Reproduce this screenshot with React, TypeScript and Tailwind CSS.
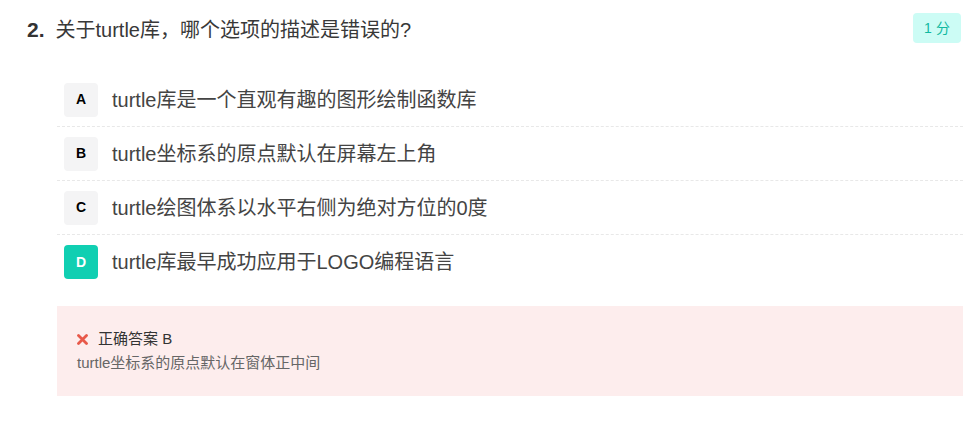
import React from "react";

const options = [
  { key: "A", text: "turtle库是一个直观有趣的图形绘制函数库", selected: false },
  { key: "B", text: "turtle坐标系的原点默认在屏幕左上角", selected: false },
  { key: "C", text: "turtle绘图体系以水平右侧为绝对方位的0度", selected: false },
  { key: "D", text: "turtle库最早成功应用于LOGO编程语言", selected: true },
];

export default function App() {
  return (
    <div
      className="w-[963px] h-[427px] bg-white pl-[27px] pt-[13px] overflow-hidden"
      style={{ fontFamily: '"Liberation Sans", Arial, "Noto Sans CJK SC", sans-serif' }}
    >
      <div className="flex items-start justify-between">
        <div className="flex items-center h-[34px] gap-[11px]">
          <span className="text-[21px] font-bold text-[#333]">2.</span>
          <span className="text-[20px] text-[#383838]">关于turtle库，哪个选项的描述是错误的?</span>
        </div>
        <div className="mr-[2px] h-[30px] w-[48px] rounded-[4px] bg-[#ccfcf5] text-[#10b9a0] text-[14px] flex items-center justify-center gap-[4px]">
          <span>1</span>
          <span>分</span>
        </div>
      </div>

      <div className="ml-[30px] mt-[26px]">
        {options.map((o, i) => (
          <div
            key={o.key}
            className={
              "flex items-center h-[54px] pl-[7px] gap-[14px] " +
              (i < options.length - 1 ? "border-b border-dashed border-[#e8e8e8]" : "")
            }
          >
            <div
              className={
                "w-[34px] h-[34px] rounded-[4px] flex items-center justify-center text-[14px] font-bold " +
                (o.selected ? "bg-[#10cfb2] text-white" : "bg-[#f4f4f5] text-black")
              }
            >
              {o.key}
            </div>
            <span className="text-[20px] text-[#444]">{o.text}</span>
          </div>
        ))}
      </div>

      <div className="ml-[30px] mt-[17px] h-[90px] bg-[#fdeded] pl-[20px] pt-[23px]">
        <div className="flex items-center h-[20px] gap-[10px]">
          <svg width="11" height="11" viewBox="0 0 11 11">
            <path d="M1.5 1.5 L9.5 9.5 M9.5 1.5 L1.5 9.5" stroke="#e8594a" strokeWidth="2.8" strokeLinecap="round" />
          </svg>
          <span className="text-[15px] text-[#333]">正确答案 B</span>
        </div>
        <div className="mt-[4px] text-[15px] text-[#666] leading-[20px]">turtle坐标系的原点默认在窗体正中间</div>
      </div>
    </div>
  );
}
